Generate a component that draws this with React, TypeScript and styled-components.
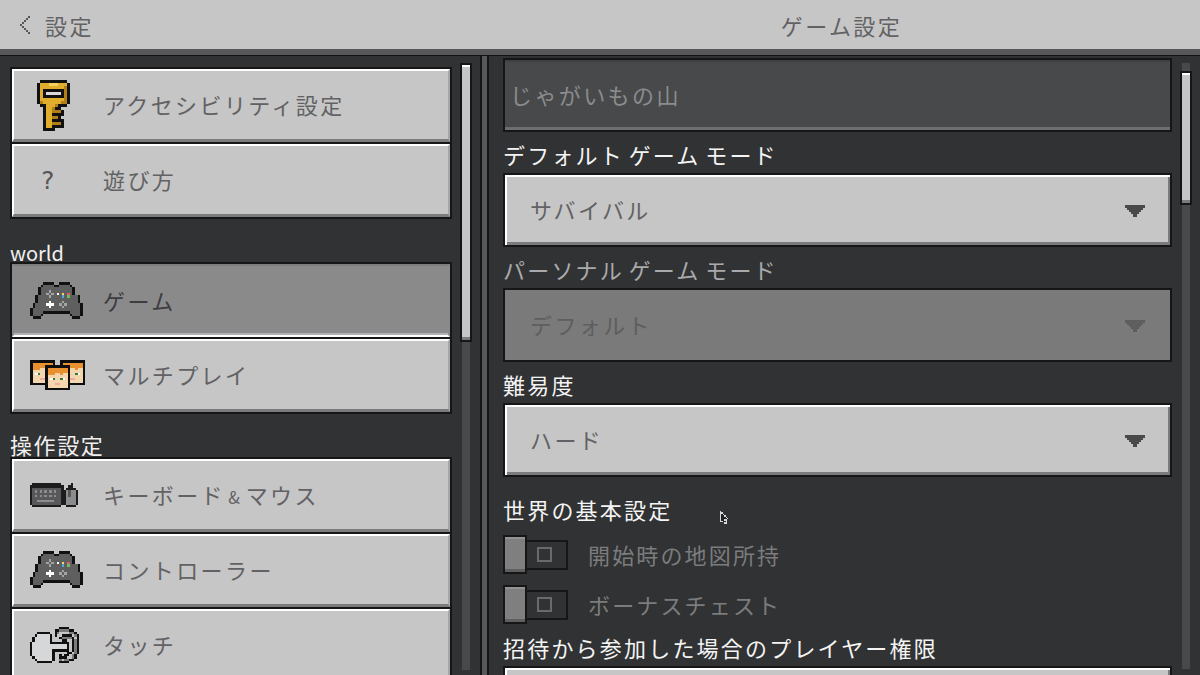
import React from 'react'
import styled, { createGlobalStyle } from 'styled-components'

const GlobalStyle = createGlobalStyle`
  html, body {
    margin: 0;
    padding: 0;
    background: #313233;
  }
  * {
    box-sizing: border-box;
  }
`

const Page = styled.div`
  position: relative;
  width: 1200px;
  height: 675px;
  overflow: hidden;
  display: flex;
  flex-direction: column;
  background: #313233;
  font-family: 'Noto Sans CJK JP', 'Noto Sans', sans-serif;
  font-size: 22px;
  letter-spacing: 2.4px;
`

const Header = styled.header`
  flex: none;
  height: 56px;
  display: grid;
  grid-template-columns: 491px 1fr 8px;
  align-items: center;
  padding-bottom: 6px;
  background: #c6c6c6;
  border-bottom: 1.5px solid #111;
  box-shadow: inset 0 -6px 0 #58585a;
  color: #626264;
`

const BackLink = styled.div`
  display: flex;
  align-items: center;
  gap: 15px;
  padding-left: 20px;
`

const HeaderTitle = styled.div`
  text-align: center;
`

const Main = styled.main`
  flex: 1;
  min-height: 0;
  display: flex;
`

const LeftPane = styled.section`
  flex: none;
  width: 480px;
  display: flex;
  padding: 7px 8px 0 10px;
  gap: 10px;
`

const NavColumn = styled.div`
  width: 442px;
  padding-top: 4px;
`

const ItemGroup = styled.div`
  display: grid;
  gap: 2px;
  padding: 2px;
  background: #161617;
`

const NavItem = styled.div<{ $selected?: boolean }>`
  height: 73px;
  display: flex;
  align-items: center;
  background: ${({ $selected }) => ($selected ? '#8a8a8b' : '#c6c6c6')};
  color: ${({ $selected }) => ($selected ? '#3d3d3f' : '#626264')};
  border-style: solid;
  border-width: ${({ $selected }) => ($selected ? '2px' : '2px 2px 3px 2px')};
  border-color: ${({ $selected }) =>
    $selected ? '#7c7d7f #8a8a8b #ffffff #8a8a8b' : '#ffffff #a6a6a8 #7b7b7d #ffffff'};
  box-shadow: ${({ $selected }) => ($selected ? 'inset 0 -2px 0 #b1b2b5' : 'none')};
`

const NavLabel = styled.span`
  padding-bottom: 2px;
  word-spacing: -4px;
`

const Amp = styled.span`
  font-size: 17px;
`

const IconSlot = styled.div<{ $inset: number }>`
  flex: none;
  width: 89px;
  padding-left: ${({ $inset }) => $inset}px;
  display: flex;
  align-items: center;
`

const HelpMark = styled.span`
  font-family: 'DejaVu Sans Mono', monospace;
  font-size: 25px;
  letter-spacing: 0;
  color: #58585a;
`

const SectionLabel = styled.div<{ $tight?: boolean }>`
  height: 46px;
  display: flex;
  align-items: flex-end;
  color: #f0f0f0;
  font-size: ${({ $tight }) => ($tight ? '20px' : '22px')};
  letter-spacing: ${({ $tight }) => ($tight ? '0' : '1.6px')};
  line-height: 24px;
  padding-bottom: ${({ $tight }) => ($tight ? '0' : '4px')};
  margin-bottom: -3px;
`

const ScrollTrack = styled.div<{ $top: number; $bottom: number }>`
  position: relative;
  flex: none;
  width: 8px;
  margin-top: ${({ $top }) => $top}px;
  margin-bottom: ${({ $bottom }) => $bottom}px;
  background: #48494a;
`

const ScrollThumb = styled.div<{ $top: number; $height: number }>`
  position: absolute;
  left: -2px;
  right: -2px;
  top: ${({ $top }) => $top}px;
  height: ${({ $height }) => $height}px;
  background: #c6c6c6;
  border: 2px solid #161617;
  box-shadow: inset 0 2px 0 #fff, inset 0 -3px 0 #7b7b7d;
`

const Divider = styled.div`
  flex: none;
  width: 9px;
  background: #58585a;
  border-left: 2px solid #161617;
  border-right: 2px solid #161617;
`

const RightPane = styled.section`
  flex: 1;
  min-width: 0;
  display: flex;
  gap: 10px;
  padding-left: 14px;
`

const Form = styled.div`
  flex: none;
  width: 669px;
  padding-top: 2px;
`

const FieldLabel = styled.div<{ $disabled?: boolean; $height?: number; $pad?: number }>`
  height: ${({ $height }) => $height ?? 41}px;
  display: flex;
  align-items: flex-end;
  line-height: 30px;
  padding-bottom: ${({ $pad }) => $pad ?? 4}px;
  letter-spacing: 2.2px;
  word-spacing: -2.5px;
  color: ${({ $disabled }) => ($disabled ? '#a9aaac' : '#f4f4f4')};
`

const TextField = styled.div`
  height: 74px;
  display: flex;
  align-items: center;
  padding: 0 0 2px 5px;
  background: #48494a;
  color: #8b8c8e;
  border: 2px solid #161617;
  box-shadow: inset 0 2px 0 #3f4041, inset 0 -3px 0 #6d6e70;
`

const Dropdown = styled.div<{ $disabled?: boolean }>`
  height: 74px;
  display: flex;
  align-items: center;
  justify-content: space-between;
  padding: 0 25px 2px 25px;
  background: ${({ $disabled }) => ($disabled ? '#7a7a7b' : '#c6c6c6')};
  color: ${({ $disabled }) => ($disabled ? '#5e5e5f' : '#626264')};
  border: 2px solid #161617;
  box-shadow: ${({ $disabled }) =>
    $disabled ? 'none' : 'inset 2px 2px 0 #fff, inset -2px -3px 0 #7b7b7d'};
`

const ToggleRow = styled.div`
  height: 39px;
  display: flex;
  align-items: center;
  gap: 20px;
  margin-bottom: 11px;
  color: #7b7c7e;
`

const ToggleText = styled.span`
  padding-bottom: 2px;
  letter-spacing: 2.15px;
`

const Toggle = styled.div`
  flex: none;
  display: flex;
  align-items: center;
`

const ToggleKnob = styled.div`
  width: 24px;
  height: 39px;
  background: #7f7f80;
  border: 2px solid #161617;
  box-shadow: inset 0 2px 0 #939394, inset 0 -3px 0 #5f5f60;
`

const ToggleTrack = styled.div`
  width: 41px;
  height: 30px;
  display: flex;
  align-items: center;
  padding-left: 10px;
  background: #313233;
  border: 2px solid #161617;
  border-left: none;
`

const ToggleDot = styled.div`
  width: 15px;
  height: 15px;
  border: 2px solid #6a6a6b;
`

const Cursor = styled.div`
  position: absolute;
  left: 720px;
  top: 511px;
  line-height: 0;
`

const ArrowSvg = styled.svg`
  display: block;
  margin-top: 3px;
`

const PixelSvg = styled.svg`
  display: block;
`

type Palette = Record<string, string>

const PixelArt = ({ rows, palette, unit }: { rows: string[]; palette: Palette; unit: number }) => (
  <PixelSvg
    width={rows[0].length * unit}
    height={rows.length * unit}
    viewBox={`0 0 ${rows[0].length} ${rows.length}`}
    shapeRendering="crispEdges"
  >
    {rows.map((row, y) =>
      row.split('').map((c, x) =>
        palette[c] ? <rect key={`${x}-${y}`} x={x} y={y} width={1.02} height={1.02} fill={palette[c]} /> : null
      )
    )}
  </PixelSvg>
)

const chevron = ['....X', '...X.', '..X..', '.X...', 'X....', '.X...', '..X..', '...X.', '....X']

const keyArt = [
  '.KKKKKKKKK.',
  'KYYYLLLYYYK',
  'KYYYYYYYYDK',
  'KYKKKKKKKDK',
  'KYKWWWWWKDK',
  'KYKKKKKKKDK',
  'KYYYYYYYYDK',
  'KDYYYYYYDDK',
  '.KKYYYDKKK.',
  '..KYYDKK...',
  '..KYYDDDK..',
  '..KYYKKKK..',
  '..KYYDDK...',
  '..KYYKKKK..',
  '..KYYDDDK..',
  '..KYYKKKK..',
  '..KKKK.....',
]

const keyPalette: Palette = { K: '#111', Y: '#e0ae2c', L: '#f3d35c', D: '#b17f18', W: '#d9d9d9' }

const padArt = [
  '.....KKKK..KKKK.....',
  '....KGGGGKKGGGGK....',
  '...KGGGGGGGGGGGGK...',
  '...KGGGLGGGGGGGGK...',
  '...KGGLGLGWGYGRGK...',
  '..KGGGGLGGGGBGNGGGK.',
  '..KGGGGGGGGGGGGGGGK.',
  '..KGGGGWGGGGLGGGGGK.',
  '.KGGGGWWWGGLGLGGGGGK',
  '.KGGGGGWGGGGLGGGGGGK',
  'KGGGGGGGGGGGGGGGGGGK',
  'KGGGGKKKKKKKKKKGGGGK',
  'KGGGK..........KGGGK',
  '.KKK............KKK.',
]

const padPalette: Palette = {
  K: '#111',
  G: '#5f5f60',
  L: '#a4a4a5',
  W: '#fff',
  Y: '#efd85a',
  R: '#e2586a',
  B: '#4aa6e0',
  N: '#6cbe55',
}

const faceArt = [
  'KKKKKKKKKK',
  'KOOOOOOOOK',
  'KOOOOOOOOK',
  'KOOOSSOSSK',
  'KSSSSSSSSK',
  'KSWGSSGWSK',
  'KSSSSSSSSK',
  'KSSSPPSSSK',
  'KSSSSSSSSK',
  'KKKKKKKKKK',
]

const facePalette: Palette = {
  K: '#0e0e0e',
  O: '#e8912e',
  S: '#f4d6ae',
  W: '#fff',
  G: '#2f7d32',
  P: '#eeaaa0',
}

const FacePile = styled.div`
  position: relative;
  width: 55px;
  height: 30px;
`

const Face = styled.div<{ $x: number; $y: number }>`
  position: absolute;
  left: ${({ $x }) => $x}px;
  top: ${({ $y }) => $y}px;
`

const keyboardArt = [
  '.KKKKKKKKKKKK....K..',
  'KKKKKKKKKKKKKK..KK..',
  'KDDDDDDDDDDDDK.KKKK.',
  'KDGDGDGDGDGDDKKGDGGK',
  'KDDDDDDDDDDDDKKGDGGK',
  'KDGDGDGDGDGDDKKGDGGK',
  'KDDDDDDDDDDDDKKGGGGK',
  'KDDGGGGGGGDDDKKGGGGK',
  'KDDDDDDDDDDDDKKGGGGK',
  '.KKKKKKKKKKKK..KKKK.',
]

const keyboardPalette: Palette = { K: '#1c1c1c', D: '#58585a', G: '#8b8c8e' }

const touchArt = [
  '............KKKK....',
  '..........KKGGGGKK..',
  '...KKKKK..KG....GGK.',
  '..KWWWWWK.K..KKKK.GK',
  '.KWWWWWWK...KGGGGK.K',
  '.KWWWWWWK....KK..KGK',
  'KWWWWWWWKKKKKKKK.KGK',
  'KWWWWWWWWWWWWWWK.KGK',
  'KWWWWWWWWWWWWWWK.KGK',
  'KWWWWWWWWKKKKKKK.KGK',
  'KWWWWWWWWK.....KK.GK',
  'KWWWWWWWWK..K.KK.GK.',
  '.KWWWWWWWK..KKK..GK.',
  '..KWWWWWWK..G.GGKK..',
  '...KKKKKK...KKKK....',
]

const touchPalette: Palette = { K: '#111', W: '#d6d7d9', G: '#7b7b7d' }

const cursorArt = ['W.....', 'WW....', 'WKW...', 'WKKW..', 'WKKKW.', 'WKKKKW', 'WKKWW.', 'WW.KW.', '...WW.']

const DropArrow = ({ color }: { color: string }) => (
  <ArrowSvg width="20" height="12" viewBox="0 0 20 12" shapeRendering="crispEdges">
    <path d="M0 0h20v3h-2v2h-2v2h-2v2h-2v3H8V9H6V7H4V5H2V3H0z" fill={color} />
  </ArrowSvg>
)

const App = () => (
  <Page>
    <GlobalStyle />
    <Header>
      <BackLink>
        <PixelArt rows={chevron} palette={{ X: '#58585a' }} unit={2} />
        <span>設定</span>
      </BackLink>
      <HeaderTitle>ゲーム設定</HeaderTitle>
    </Header>
    <Main>
      <LeftPane>
        <NavColumn>
          <ItemGroup>
            <NavItem>
              <IconSlot $inset={23}>
                <PixelArt rows={keyArt} palette={keyPalette} unit={3} />
              </IconSlot>
              <NavLabel>アクセシビリティ設定</NavLabel>
            </NavItem>
            <NavItem>
              <IconSlot $inset={26}>
                <HelpMark>?</HelpMark>
              </IconSlot>
              <NavLabel>遊び方</NavLabel>
            </NavItem>
          </ItemGroup>
          <SectionLabel $tight>world</SectionLabel>
          <ItemGroup>
            <NavItem $selected>
              <IconSlot $inset={16}>
                <PixelArt rows={padArt} palette={padPalette} unit={2.65} />
              </IconSlot>
              <NavLabel>ゲーム</NavLabel>
            </NavItem>
            <NavItem>
              <IconSlot $inset={16}>
                <FacePile>
                  <Face $x={0} $y={0}>
                    <PixelArt rows={faceArt} palette={facePalette} unit={2.5} />
                  </Face>
                  <Face $x={30} $y={0}>
                    <PixelArt rows={faceArt} palette={facePalette} unit={2.5} />
                  </Face>
                  <Face $x={15} $y={5}>
                    <PixelArt rows={faceArt} palette={facePalette} unit={2.5} />
                  </Face>
                </FacePile>
              </IconSlot>
              <NavLabel>マルチプレイ</NavLabel>
            </NavItem>
          </ItemGroup>
          <SectionLabel>操作設定</SectionLabel>
          <ItemGroup>
            <NavItem>
              <IconSlot $inset={16}>
                <PixelArt rows={keyboardArt} palette={keyboardPalette} unit={2.4} />
              </IconSlot>
              <NavLabel>
                キーボード <Amp>&amp;</Amp> マウス
              </NavLabel>
            </NavItem>
            <NavItem>
              <IconSlot $inset={16}>
                <PixelArt rows={padArt} palette={padPalette} unit={2.65} />
              </IconSlot>
              <NavLabel>コントローラー</NavLabel>
            </NavItem>
            <NavItem>
              <IconSlot $inset={16}>
                <PixelArt rows={touchArt} palette={touchPalette} unit={2.45} />
              </IconSlot>
              <NavLabel>タッチ</NavLabel>
            </NavItem>
          </ItemGroup>
        </NavColumn>
        <ScrollTrack $top={0} $bottom={5}>
          <ScrollThumb $top={0} $height={279} />
        </ScrollTrack>
      </LeftPane>
      <Divider />
      <RightPane>
        <Form>
          <TextField>じゃがいもの山</TextField>
          <FieldLabel>デフォルト ゲーム モード</FieldLabel>
          <Dropdown>
            サバイバル
            <DropArrow color="#4a4a4c" />
          </Dropdown>
          <FieldLabel $disabled>パーソナル ゲーム モード</FieldLabel>
          <Dropdown $disabled>
            デフォルト
            <DropArrow color="#5e5e5f" />
          </Dropdown>
          <FieldLabel>難易度</FieldLabel>
          <Dropdown>
            ハード
            <DropArrow color="#4a4a4c" />
          </Dropdown>
          <FieldLabel $height={58} $pad={11}>
            世界の基本設定
          </FieldLabel>
          <ToggleRow>
            <Toggle>
              <ToggleKnob />
              <ToggleTrack>
                <ToggleDot />
              </ToggleTrack>
            </Toggle>
            <ToggleText>開始時の地図所持</ToggleText>
          </ToggleRow>
          <ToggleRow>
            <Toggle>
              <ToggleKnob />
              <ToggleTrack>
                <ToggleDot />
              </ToggleTrack>
            </Toggle>
            <ToggleText>ボーナスチェスト</ToggleText>
          </ToggleRow>
          <FieldLabel $height={31}>招待から参加した場合のプレイヤー権限</FieldLabel>
          <Dropdown />
        </Form>
        <ScrollTrack $top={7} $bottom={6}>
          <ScrollThumb $top={8} $height={134} />
        </ScrollTrack>
      </RightPane>
    </Main>
    <Cursor>
      <PixelArt rows={cursorArt} palette={{ K: '#222', W: '#d8d8d8' }} unit={1.4} />
    </Cursor>
  </Page>
)

export default App
